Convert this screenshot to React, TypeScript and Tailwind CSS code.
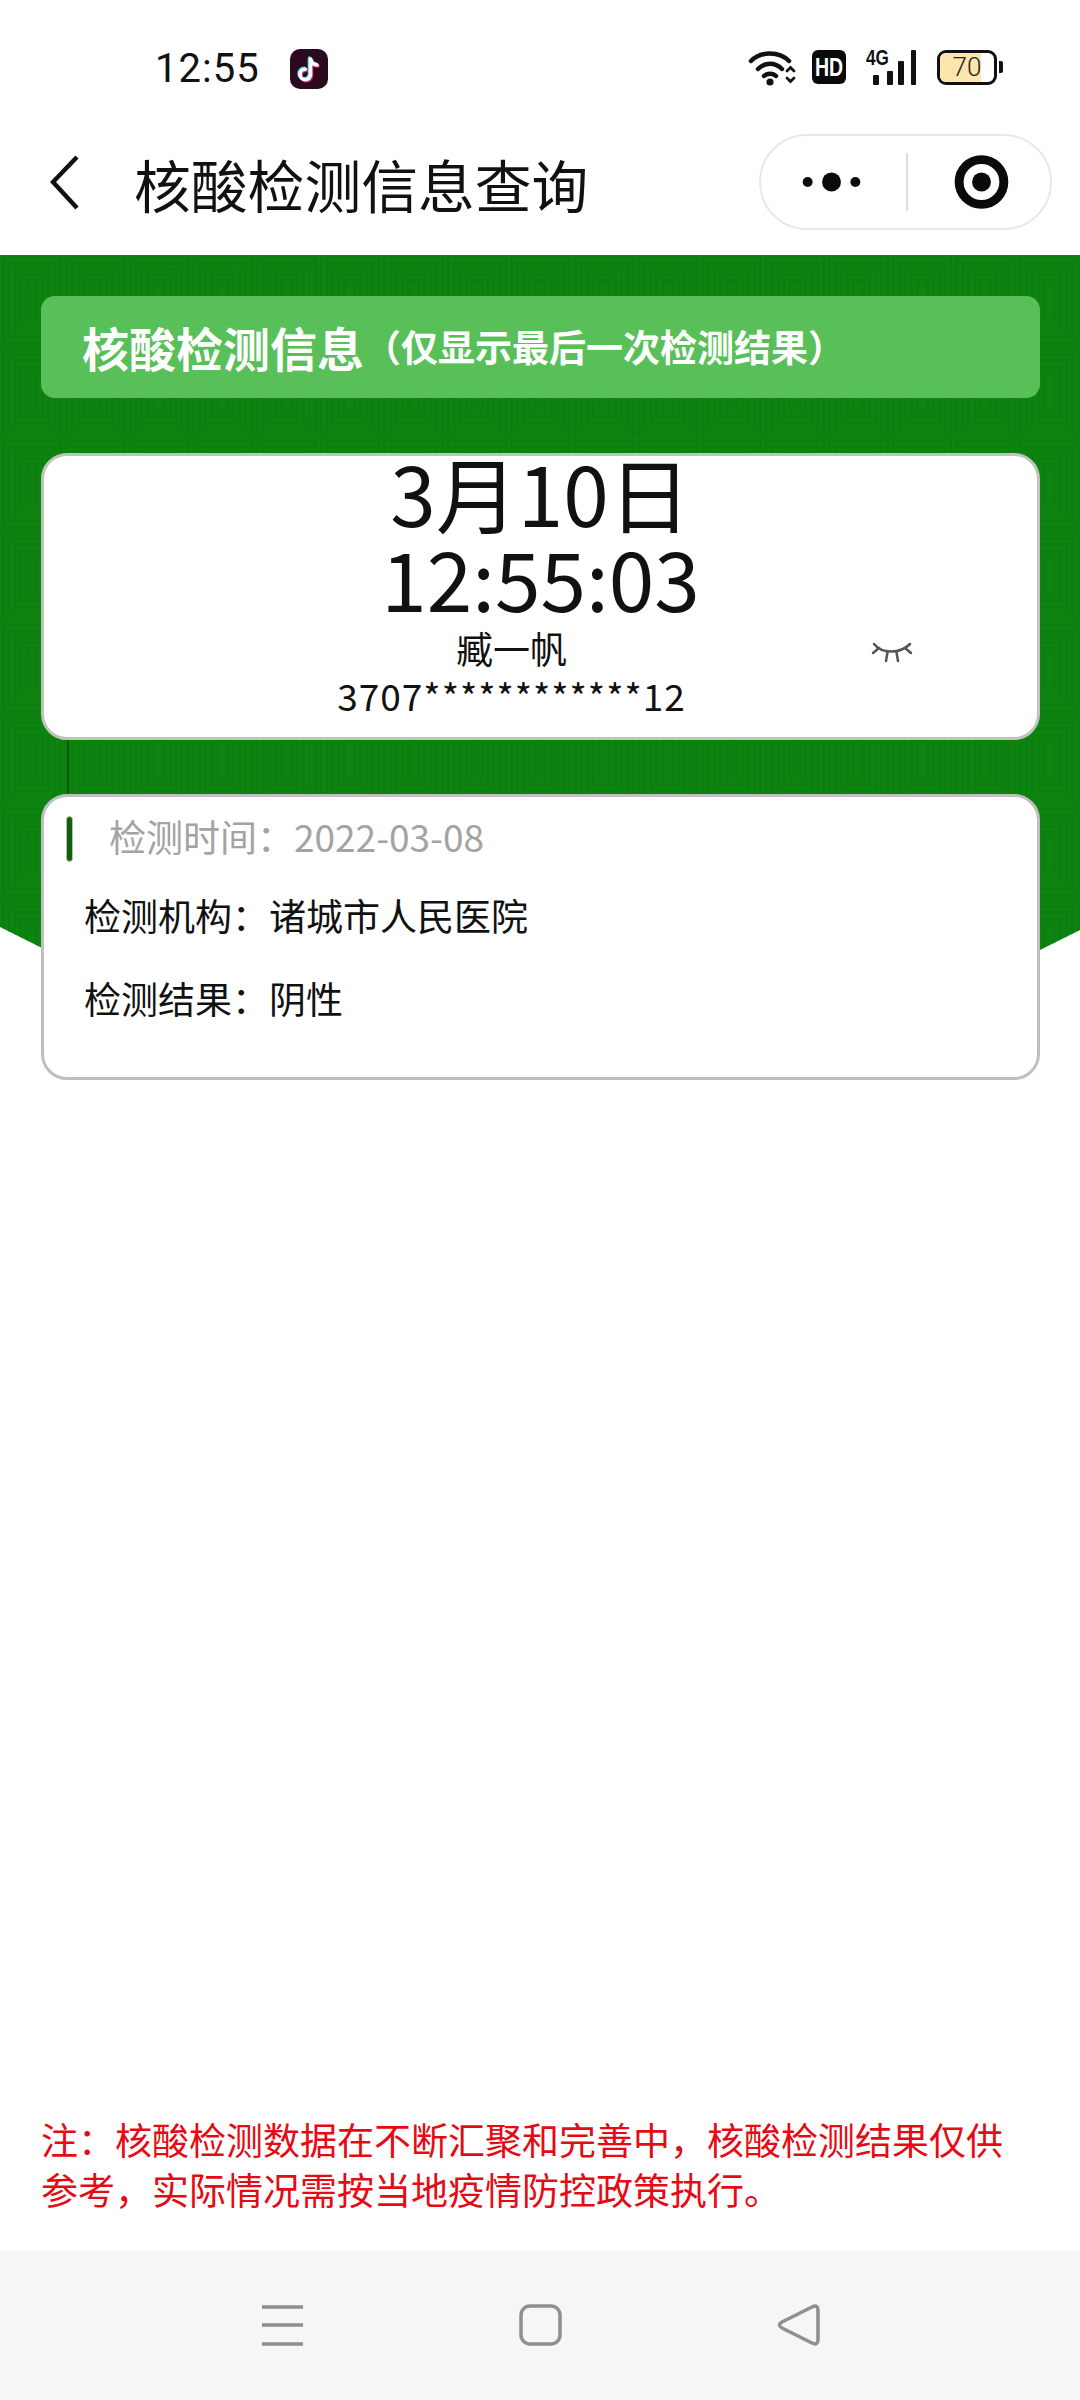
import React from 'react';

const CJK = { fontFamily: '"Noto Sans CJK SC", "Noto Sans", sans-serif' };

function GreenBackdrop() {
  // 底纹: 一圈圈的同心方块
  const rings = [29, 23, 17, 11, 5];
  return (
    <div className="absolute left-0 top-0 w-full h-[730px] bg-[#0d840f] [clip-path:polygon(0_0,100%_0,100%_675px,980px_725px,100px_722px,0_672px)]">
      <svg width="1080" height="730" className="block">
        <defs>
          <pattern id="tile" width="63.6" height="92" patternUnits="userSpaceOnUse" x="0" y="-1">
            {rings.map((r) => (
              <rect
                key={r}
                x={31.8 - r}
                y={46 - r - 14}
                width={r * 2}
                height={r * 2 + 28}
                fill="none"
                stroke="#0a7a0d"
                strokeWidth="1.6"
                opacity="0.8"
              />
            ))}
          </pattern>
        </defs>
        <rect width="1080" height="730" fill="url(#tile)" />
      </svg>
    </div>
  );
}

function StatusBar() {
  return (
    <div className="h-[130px] flex items-start relative">
      <div className="ml-[155px] mt-[46px] text-[40px] leading-[46px] text-[#111] tracking-[1px]" style={{ fontFamily: 'Roboto, sans-serif', fontWeight: 400 }}>
        12:55
      </div>
      <svg width="38" height="40" viewBox="0 0 38 40" className="ml-[30px] mt-[49px]">
        <rect width="38" height="40" rx="10" fill="#2b0a20" />
        <g fill="none" strokeWidth="3.6" strokeLinecap="round">
          <g stroke="#3fe3e8" transform="translate(-1 -1)">
            <path d="M20.5 10V25.5a5.2 5.2 0 1 1-5.2-5.2" />
            <path d="M21 11c.6 2.8 3 4.8 6 5" />
          </g>
          <g stroke="#f0245c" transform="translate(1 1)">
            <path d="M20.5 10V25.5a5.2 5.2 0 1 1-5.2-5.2" />
            <path d="M21 11c.6 2.8 3 4.8 6 5" />
          </g>
          <g stroke="#fff">
            <path d="M20.5 10V25.5a5.2 5.2 0 1 1-5.2-5.2" />
            <path d="M21 11c.6 2.8 3 4.8 6 5" />
          </g>
        </g>
      </svg>

      <div className="ml-auto mr-[77px] mt-[50px] flex items-start">
        <svg width="48" height="36" viewBox="0 0 48 36" fill="none" stroke="#111" strokeLinecap="round">
          <path d="M3 11C13 1 31 1 41 11" strokeWidth="4.5" />
          <path d="M10 19C17 12 27 12 34 19" strokeWidth="4.5" />
          <path d="M16 26C19 23 25 23 28 26" strokeWidth="4.5" />
          <circle cx="22" cy="32" r="3.6" fill="#111" stroke="none" />
          <path d="M39 21l3.500-3.500 3.500 3.500M39 28l3.500 3.500 3.500-3.500" strokeWidth="2.800" />
        </svg>
        <div className="ml-[16px] w-[34px] h-[34px] rounded-[6px] bg-[#0a0a0a] flex items-center justify-center">
          <span className="text-white text-[25px] font-bold leading-none [transform:scaleX(0.78)]" style={{ fontFamily: '"Liberation Sans", sans-serif' }}>HD</span>
        </div>
        <div className="ml-[20px] relative w-[50px] h-[35px]">
          <span className="absolute left-0 top-[-3px] text-[22px] leading-[22px] font-bold text-[#111] origin-left [transform:scaleX(0.78)]" style={{ fontFamily: '"Liberation Sans", sans-serif' }}>4G</span>
          <svg width="50" height="35" viewBox="0 0 50 35" fill="#111">
            <rect x="7" y="25" width="6" height="10" rx="1" />
            <rect x="21" y="21" width="6" height="14" rx="1" />
            <rect x="32" y="11" width="6" height="24" rx="1" />
            <rect x="45" y="0" width="5" height="35" rx="1" />
          </svg>
        </div>
        <div className="ml-[21px] w-[60px] h-[35px] rounded-[9px] border-[3px] border-[#111] overflow-hidden relative">
          <div className="absolute left-0 top-0 h-full w-[41px] bg-[#fde5ae]" />
          <span className="relative block text-center text-[26px] leading-[29px] text-[#222]" style={{ fontFamily: 'Roboto, sans-serif', fontWeight: 300 }}>70</span>
        </div>
        <div className="ml-[2px] mt-[11px] w-[4px] h-[12px] rounded-r-[2px] bg-[#111]" />
      </div>
    </div>
  );
}

function NavBar() {
  return (
    <div className="h-[125px] flex items-start relative">
      <svg width="32" height="56" viewBox="0 0 32 56" fill="none" stroke="#111" strokeWidth="4.500" className="ml-[50px] mt-[25px]">
        <path d="M27 2L3 27L27 53" />
      </svg>
      <div className="ml-[52px] mt-[11px] text-[56.800px] leading-[84px] text-[#111]" style={CJK}>核酸检测信息查询</div>

      <div className="ml-auto mr-[28px] mt-[4px] w-[293px] h-[96px] rounded-full border-[2.500px] border-[#e8e8e8] flex items-center">
        <svg width="146" height="60" viewBox="0 0 146 60" fill="#0a0a0a">
          <circle cx="47" cy="30" r="5" />
          <circle cx="71" cy="30" r="9.500" />
          <circle cx="95" cy="30" r="5" />
        </svg>
        <div className="w-[2px] h-[58px] bg-[#dddddd]" />
        <svg width="143" height="64" viewBox="0 0 143 64" fill="none">
          <circle cx="74" cy="32" r="22.500" stroke="#0a0a0a" strokeWidth="9" />
          <circle cx="74" cy="32" r="9.500" fill="#0a0a0a" />
        </svg>
      </div>
    </div>
  );
}

function InfoRow({ label, value }: { label: string; value: string }) {
  return (
    <div className="h-[83px] pt-[2px] flex items-center pl-[40px] text-[37px] text-[#111]" style={CJK}>
      {label}：{value}
    </div>
  );
}

export default function App() {
  return (
    <div className="w-[1080px] h-[2400px] bg-white flex flex-col overflow-hidden" style={CJK}>
      <StatusBar />
      <NavBar />

      <main className="relative flex-1 pl-[41px] pr-[40px]">
        <GreenBackdrop />

        <div className="relative pt-[41px]">
          <div className="h-[102px] rounded-[14px] bg-[#59c059] flex items-center pl-[41px] text-white font-bold">
            <span className="text-[47px]">核酸检测信息</span>
            <span className="text-[37px]">（仅显示最后一次检测结果）</span>
          </div>

          <div className="relative mt-[55px] h-[287px] rounded-[26px] bg-white border-[3px] border-[#bfc4bb] flex flex-col items-center text-[#111]">
            <div className="text-[82px] leading-[84px] mt-[-6px]">3月10日</div>
            <div className="text-[82px] leading-[85px]">12:55:03</div>
            <div className="mr-[58px] text-[37px] leading-[48px] mt-[5px]">臧一帆</div>
            <div className="mr-[58px] text-[37px] leading-[46px] tracking-[1px]">3707************12</div>
            <svg width="44" height="24" viewBox="0 0 44 24" fill="none" stroke="#555" strokeWidth="2.500" strokeLinecap="round" className="absolute left-[826px] top-[186px]">
              <path d="M4 2C12 12 30 12 40 2" />
              <path d="M3 11L9 6M41 11L35 6M16 19L17.500 10.500M28 19L26.500 10.500" />
            </svg>
          </div>

          <div className="ml-[26px] w-[2px] h-[54px] bg-[#0a5a0c]" />

          <div className="h-[286px] rounded-[26px] bg-white border-[3px] border-[#bfbfbf]">
            <div className="h-[68px] mt-[8px] flex items-center pl-[22px]">
              <div className="w-[7px] h-[46px] rounded-full bg-[#0a640c] border border-[#c9b9b0]" />
              <span className="ml-[36px] mt-[-5px] text-[37px] text-[#a3a3a3]">检测时间：2022-03-08</span>
            </div>
            <InfoRow label="检测机构" value="诸城市人民医院" />
            <InfoRow label="检测结果" value="阴性" />
          </div>
        </div>
      </main>

      <div className="pl-[41px] pb-[37px] w-[1010px] text-[37px] leading-[50px] text-[#e60a14]">
        注：核酸检测数据在不断汇聚和完善中，核酸检测结果仅供<br />
        参考，实际情况需按当地疫情防控政策执行。
      </div>

      <div className="h-[149px] bg-[#f6f6f6] flex items-start">
        <svg width="1080" height="149" viewBox="0 0 1080 149" fill="none" stroke="#8f8f8f" strokeWidth="3.500">
          <path d="M262 56H303M262 74H303M262 93H303" />
          <rect x="521" y="55" width="39" height="38" rx="9" />
          <path d="M812 56Q818 53 818 60V88Q818 95 812 92L782 77Q777 74 782 71Z" strokeLinejoin="round" />
        </svg>
      </div>
    </div>
  );
}
